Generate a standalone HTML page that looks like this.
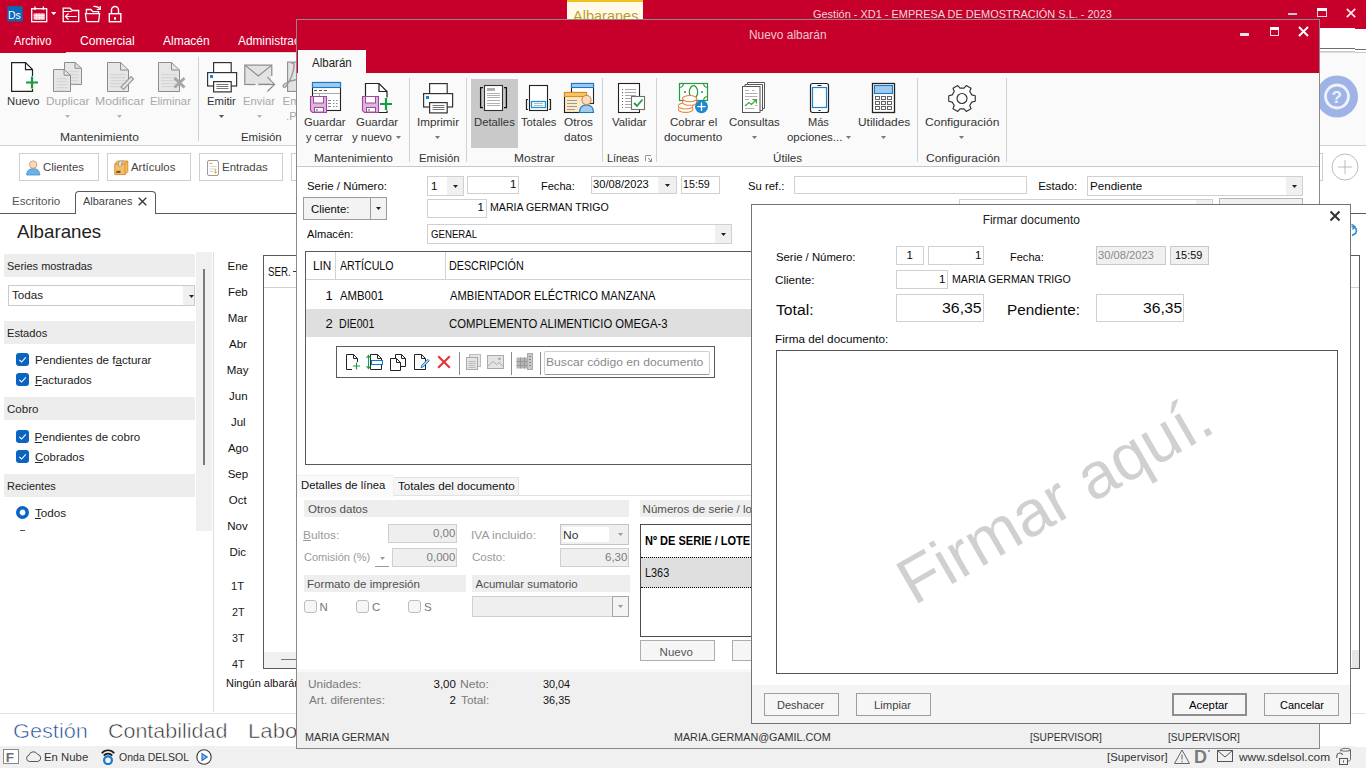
<!DOCTYPE html>
<html lang="es"><head><meta charset="utf-8"><title>Firmar documento</title><style>
html,body{margin:0;padding:0;}
body{width:1366px;height:768px;overflow:hidden;background:#fff;font-family:"Liberation Sans",sans-serif;position:relative;}
.a{position:absolute;box-sizing:border-box;display:block;}
.t{position:absolute;white-space:pre;display:block;}
.t u{text-decoration:underline;text-underline-offset:1px;}
.w{position:absolute;box-sizing:border-box;overflow:hidden;}
</style></head><body>
<div class="a " style="left:0px;top:0px;width:1366px;height:53px;background:#c7002b;"></div>
<div class="a " style="left:0px;top:53px;width:1366px;height:93px;background:#fafafa;"></div>
<div class="a " style="left:66px;top:52px;width:1300px;height:1px;background:#dcdcdc;"></div>
<div class="a " style="left:0px;top:145px;width:1366px;height:1px;background:#d2d2d2;"></div>
<div class="a " style="left:1320px;top:28px;width:35px;height:24px;background:#ffffff;"></div>
<div class="a " style="left:1355px;top:29px;width:11px;height:24px;background:#ffffff;"></div>
<div class="a " style="left:1320px;top:48px;width:35px;height:1px;background:#6e6e6e;"></div>
<div class="a " style="left:1355px;top:49px;width:11px;height:1px;background:#6e6e6e;"></div>
<div class="a " style="left:1320px;top:51px;width:35px;height:1px;background:#c8c8c8;"></div>
<div class="a " style="left:1355px;top:52px;width:11px;height:1px;background:#c8c8c8;"></div>
<div class="a " style="left:567px;top:0px;width:76px;height:19px;background:#fffbe8;"></div>
<div class="a " style="left:567px;top:0px;width:76px;height:2px;background:#f2c11d;"></div>
<span class="t" style="left:572.50px;top:7.50px;font-size:15px;line-height:15px;color:#c19a28;transform:scaleX(0.9687);transform-origin:0 0;">Albaranes</span>
<span class="t" style="left:812.50px;top:8.79px;font-size:11px;line-height:11px;color:#f3d6db;transform:scaleX(0.9958);transform-origin:0 0;">Gestión - XD1 - EMPRESA DE DEMOSTRACIÓN S.L. - 2023</span>
<div class="a " style="left:1288px;top:13px;width:9px;height:2px;background:#c3c9c8;"></div>
<svg class="a" style="left:1317px;top:8px;" width="10" height="9" viewBox="0 0 10 9"><rect x="0.5" y="0.5" width="9" height="8" fill="none" stroke="#ecd9dc"/><rect x="0" y="0" width="10" height="3" fill="#fff"/></svg>
<svg class="a" style="left:1346px;top:8px;" width="10" height="10" viewBox="0 0 10 10"><path d="M0.8 0.8L9.2 9.2M9.2 0.8L0.8 9.2" stroke="#f4e9ea" stroke-width="1.7"/></svg>
<svg class="a" style="left:7px;top:6px;" width="16" height="16" viewBox="0 0 16 16"><rect x="0.4" y="0.2" width="15.3" height="15.2" fill="#0a6ab8"/></svg>
<span class="t" style="left:8.45px;top:9.61px;font-size:10.5px;line-height:10.5px;color:#fff;transform:scaleX(1.0043);transform-origin:0 0;">Ds</span>
<svg class="a" style="left:31px;top:6px;" width="17" height="17" viewBox="0 0 17 17"><rect x="0.7" y="2.7" width="15" height="13" fill="none" stroke="#fff" stroke-width="1.3"/><rect x="2.6" y="7.4" width="11.2" height="6.4" fill="#f3bcc7"/><path d="M2.6 9.6H13.8M2.6 11.7H13.8M5.4 7.4V13.8M8.2 7.4V13.8M11 7.4V13.8" stroke="#fff" stroke-width="0.7"/><path d="M4 0.5V4M12.4 0.5V4" stroke="#fff" stroke-width="1.3"/></svg>
<svg class="a" style="left:50.8px;top:11.950000000000001px;" width="5.4" height="3.2" viewBox="0 0 5.4 3.2"><path d="M0 0H5.4L2.7 3.2Z" fill="#fff"/></svg>
<svg class="a" style="left:62px;top:7px;" width="18" height="16" viewBox="0 0 18 16"><path d="M1.2 14.7V1.2H8L10.4 3.5H16.7V14.7Z" fill="none" stroke="#fff" stroke-width="1.3"/><path d="M1.2 4.5H9.2L10.4 3.5" fill="none" stroke="#fff" stroke-width="1"/><path d="M14.7 9.5H3.8M6.5 6.5L3.5 9.5L6.5 12.5" fill="none" stroke="#fff" stroke-width="1.2"/></svg>
<svg class="a" style="left:84px;top:4px;" width="18" height="19" viewBox="0 0 18 19"><path d="M2.4 9.7V5.5H6.9L8.8 7.7H14.6V9.7" fill="none" stroke="#fff" stroke-width="1.3"/><path d="M1.4 9.7H15.6L14.6 17.7H2.6Z" fill="none" stroke="#fff" stroke-width="1.3"/><path d="M9.3 2.5C12.5 2.2 14.8 3 16 5.3" fill="none" stroke="#fff" stroke-width="1.2"/><path d="M16.3 2V5.5H12.8" fill="none" stroke="#fff" stroke-width="1.2"/></svg>
<svg class="a" style="left:108px;top:5px;" width="14" height="18" viewBox="0 0 14 18"><rect x="1.3" y="8.7" width="11.5" height="8" fill="none" stroke="#fff" stroke-width="1.4"/><path d="M3.5 8.7V5A3.5 3.5 0 0 1 10.5 5V8.7" fill="none" stroke="#fff" stroke-width="1.4"/><rect x="6" y="12.2" width="2" height="2.5" fill="#fff"/></svg>
<span class="t" style="left:14.00px;top:35.24px;font-size:12px;line-height:12px;color:#fff;transform:scaleX(0.9338);transform-origin:0 0;">Archivo</span>
<span class="t" style="left:80.49px;top:35.24px;font-size:12px;line-height:12px;color:#fff;transform:scaleX(1.0142);transform-origin:0 0;">Comercial</span>
<span class="t" style="left:163.00px;top:35.24px;font-size:12px;line-height:12px;color:#fff;">Almacén</span>
<span class="t" style="left:238.00px;top:35.24px;font-size:12px;line-height:12px;color:#fff;transform:scaleX(0.9872);transform-origin:0 0;">Administración</span>
<svg class="a" style="left:11px;top:61px;" width="28" height="32" viewBox="0 0 28 32"><path d="M0.6 1.6H14.5L21.5 8.6V30.4H0.6Z" fill="#fff" stroke="#222" stroke-width="1.2"/><path d="M14.5 1.6V8.6H21.5" fill="none" stroke="#222" stroke-width="1.2"/><rect x="14.5" y="15" width="10" height="13" fill="#f5f5f5"/><rect x="14.5" y="15" width="6.4" height="13" fill="#fff"/><path d="M21 15.5V27.5M15 21.5H27" stroke="#1a9a3a" stroke-width="2.2"/></svg>
<span class="t" style="left:6.74px;top:95.57px;font-size:11.5px;line-height:11.5px;color:#333;transform:scaleX(0.9812);transform-origin:0 0;">Nuevo</span>
<svg class="a" style="left:52px;top:61px;" width="32" height="32" viewBox="0 0 32 32"><path d="M12.5 1.5H23.04L29.5 7.220000000000001V23.5H12.5Z" fill="#e6e6e6" stroke="#8c8c8c" stroke-width="1"/><path d="M23.04 1.5V7.220000000000001H29.5" fill="none" stroke="#8c8c8c" stroke-width="1"/><path d="M15.5 10.74H26.5" stroke="#d2d2d2" stroke-width="1"/><path d="M15.5 13.74H26.5" stroke="#d2d2d2" stroke-width="1"/><path d="M15.5 16.740000000000002H26.5" stroke="#d2d2d2" stroke-width="1"/><path d="M15.5 19.740000000000002H26.5" stroke="#d2d2d2" stroke-width="1"/><path d="M15.5 22.740000000000002H26.5" stroke="#d2d2d2" stroke-width="1"/><path d="M1.5 8.5H12.04L18.5 14.22V30.5H1.5Z" fill="#e6e6e6" stroke="#8c8c8c" stroke-width="1"/><path d="M12.04 8.5V14.22H18.5" fill="none" stroke="#8c8c8c" stroke-width="1"/><path d="M4.5 17.740000000000002H15.5" stroke="#d2d2d2" stroke-width="1"/><path d="M4.5 20.740000000000002H15.5" stroke="#d2d2d2" stroke-width="1"/><path d="M4.5 23.740000000000002H15.5" stroke="#d2d2d2" stroke-width="1"/><path d="M4.5 26.740000000000002H15.5" stroke="#d2d2d2" stroke-width="1"/><path d="M4.5 29.740000000000002H15.5" stroke="#d2d2d2" stroke-width="1"/></svg>
<span class="t" style="left:45.60px;top:95.57px;font-size:11.5px;line-height:11.5px;color:#a9a9a9;transform:scaleX(1.0303);transform-origin:0 0;">Duplicar</span>
<svg class="a" style="left:64.5px;top:115.25px;" width="5" height="3.0" viewBox="0 0 5 3.0"><path d="M0 0H5L2.5 3.0Z" fill="#b5b5b5"/></svg>
<svg class="a" style="left:106px;top:61px;" width="30" height="32" viewBox="0 0 30 32"><path d="M1.5 1.5H14.52L22.5 9.04V30.5H1.5Z" fill="#e6e6e6" stroke="#8c8c8c" stroke-width="1"/><path d="M14.52 1.5V9.04H22.5" fill="none" stroke="#8c8c8c" stroke-width="1"/><path d="M4.5 13.68H19.5" stroke="#d2d2d2" stroke-width="1"/><path d="M4.5 16.68H19.5" stroke="#d2d2d2" stroke-width="1"/><path d="M4.5 19.68H19.5" stroke="#d2d2d2" stroke-width="1"/><path d="M4.5 22.68H19.5" stroke="#d2d2d2" stroke-width="1"/><path d="M4.5 25.68H19.5" stroke="#d2d2d2" stroke-width="1"/><path d="M15 26L25 15.5L27.5 18L17.5 28.5Z" fill="#e6e6e6" stroke="#9a9a9a" stroke-width="1.2"/></svg>
<span class="t" style="left:94.57px;top:95.57px;font-size:11.5px;line-height:11.5px;color:#a9a9a9;transform:scaleX(1.0601);transform-origin:0 0;">Modificar</span>
<svg class="a" style="left:116.5px;top:115.25px;" width="5" height="3.0" viewBox="0 0 5 3.0"><path d="M0 0H5L2.5 3.0Z" fill="#b5b5b5"/></svg>
<svg class="a" style="left:157px;top:61px;" width="30" height="32" viewBox="0 0 30 32"><path d="M1.5 1.5H14.52L22.5 9.04V30.5H1.5Z" fill="#e6e6e6" stroke="#8c8c8c" stroke-width="1"/><path d="M14.52 1.5V9.04H22.5" fill="none" stroke="#8c8c8c" stroke-width="1"/><path d="M4.5 13.68H19.5" stroke="#d2d2d2" stroke-width="1"/><path d="M4.5 16.68H19.5" stroke="#d2d2d2" stroke-width="1"/><path d="M4.5 19.68H19.5" stroke="#d2d2d2" stroke-width="1"/><path d="M4.5 22.68H19.5" stroke="#d2d2d2" stroke-width="1"/><path d="M4.5 25.68H19.5" stroke="#d2d2d2" stroke-width="1"/><path d="M17.5 17L27.5 26.5M27.5 17L17.5 26.5" stroke="#a6a6a6" stroke-width="3"/></svg>
<span class="t" style="left:150.14px;top:95.57px;font-size:11.5px;line-height:11.5px;color:#a9a9a9;transform:scaleX(0.9846);transform-origin:0 0;">Eliminar</span>
<span class="t" style="left:59.59px;top:131.67px;font-size:11.5px;line-height:11.5px;color:#333;transform:scaleX(1.0455);transform-origin:0 0;">Mantenimiento</span>
<div class="a " style="left:198px;top:57px;width:1px;height:84px;background:#d0d0d0;"></div>
<svg class="a" style="left:207px;top:62px;" width="31" height="31" viewBox="0 0 31 31"><rect x="6.6" y="0.6" width="17.6" height="12" fill="#fff" stroke="#333" stroke-width="1.2"/><rect x="0.6" y="10.6" width="29" height="13.4" fill="#fff" stroke="#333" stroke-width="1.2"/><rect x="6.6" y="19.6" width="17.6" height="10.3" fill="#fff" stroke="#333" stroke-width="1.2"/><path d="M9.5 22.5H21.5M9.5 24.5H21.5M9.5 26.5H21.5" stroke="#666" stroke-width="0.9"/><rect x="3" y="13" width="3" height="3" fill="#1a80d0"/></svg>
<span class="t" style="left:206.84px;top:95.57px;font-size:11.5px;line-height:11.5px;color:#333;transform:scaleX(0.9797);transform-origin:0 0;">Emitir</span>
<svg class="a" style="left:219.1px;top:115.25px;" width="5" height="3.0" viewBox="0 0 5 3.0"><path d="M0 0H5L2.5 3.0Z" fill="#555"/></svg>
<svg class="a" style="left:244px;top:64px;" width="33" height="29" viewBox="0 0 33 29"><rect x="0.8" y="1.1" width="27" height="19.4" fill="#e3e3e3" stroke="#8c8c8c" stroke-width="1.2"/><path d="M0.8 1.1L14.3 11.9L27.8 1.1" fill="none" stroke="#8c8c8c" stroke-width="1.2"/><rect x="11.5" y="19.5" width="3" height="2.2" fill="#fafafa"/><rect x="27" y="12" width="3" height="9" fill="#fafafa"/><path d="M14.3 20.4H30.3M23.4 13.2L30.5 20.4L23.4 27.5" fill="none" stroke="#8c8c8c" stroke-width="1.2"/></svg>
<span class="t" style="left:243.14px;top:95.57px;font-size:11.5px;line-height:11.5px;color:#a9a9a9;transform:scaleX(0.9802);transform-origin:0 0;">Enviar</span>
<svg class="a" style="left:256.5px;top:115.25px;" width="5" height="3.0" viewBox="0 0 5 3.0"><path d="M0 0H5L2.5 3.0Z" fill="#b5b5b5"/></svg>
<svg class="a" style="left:287px;top:61px;overflow:visible;" width="12" height="32" viewBox="0 0 12 32"><rect x="0.6" y="1.1" width="20" height="29.3" fill="#e3e3e3" stroke="#8c8c8c" stroke-width="1.1"/><path d="M5 3C4 1 7.5 1 7 5C6.5 12 4 18 -0.5 24.5C-3 28 -5.5 25.5 -2.5 23C1 20.5 5 19.3 9 18.8" fill="none" stroke="#9a9a9a" stroke-width="1.5"/></svg>
<span class="t" style="left:282.52px;top:95.57px;font-size:11.5px;line-height:11.5px;color:#a9a9a9;">Em</span>
<span class="t" style="left:286.00px;top:110.77px;font-size:11.5px;line-height:11.5px;color:#a9a9a9;">.P</span>
<span class="t" style="left:240.53px;top:131.67px;font-size:11.5px;line-height:11.5px;color:#333;transform:scaleX(0.9930);transform-origin:0 0;">Emisión</span>
<svg class="a" style="left:1315px;top:75px;" width="44" height="44" viewBox="0 0 44 44"><circle cx="22" cy="21.5" r="21" fill="#9fb3e6"/><circle cx="22" cy="21.5" r="11.5" fill="none" stroke="#eef2fc" stroke-width="2.8"/></svg>
<span class="t" style="left:1331.55px;top:89.01px;font-size:17px;line-height:17px;color:#eef2fc;font-weight:bold;">?</span>
<svg class="a" style="left:1330.7px;top:152.5px;" width="28" height="28" viewBox="0 0 28 28"><circle cx="14" cy="14" r="13" fill="#fff" stroke="#b4b4b4" stroke-width="0.9"/><path d="M14 7V21M7 14H21" stroke="#b4b4b4" stroke-width="0.9"/></svg>
<div class="a " style="left:1320px;top:153px;width:3px;height:28px;background:#fff;border:1px solid #cfcfcf;border-left:none;"></div>
<div class="a " style="left:19px;top:153px;width:80px;height:28px;background:#fff;border:1px solid #cfcfcf;"></div>
<span class="t" style="left:42.51px;top:161.67px;font-size:11.5px;line-height:11.5px;color:#444;transform:scaleX(0.9846);transform-origin:0 0;">Clientes</span>
<svg class="a" style="left:25px;top:158px;" width="18" height="18" viewBox="0 0 18 18"><path d="M1.6 17C1.8 12.6 4.5 10.6 8.2 10.6S14.6 12.6 14.8 17Z" fill="#6fb1e6" stroke="#3f8fd2" stroke-width="0.8"/><circle cx="8.2" cy="6.6" r="3.7" fill="#f9dcc0" stroke="#cf9a6a" stroke-width="0.9"/></svg>
<div class="a " style="left:107px;top:153px;width:84px;height:28px;background:#fff;border:1px solid #cfcfcf;"></div>
<span class="t" style="left:131.00px;top:161.67px;font-size:11.5px;line-height:11.5px;color:#444;transform:scaleX(0.9915);transform-origin:0 0;">Artículos</span>
<svg class="a" style="left:113px;top:158px;" width="18" height="18" viewBox="0 0 18 18"><path d="M1.8 6L4.5 3H14.8V13.8L12 16.6H1.8Z" fill="#f5bf6a" stroke="#d08a28" stroke-width="0.9"/><path d="M1.8 6H12V16.6M12 6L14.8 3" fill="none" stroke="#d08a28" stroke-width="0.9"/><path d="M5.5 8V5L7.5 3H10.5L8.5 5V8Z" fill="#e4e4e4" stroke="#888" stroke-width="0.6"/><rect x="3.3" y="12.8" width="4.2" height="2.2" fill="#7a5a2a"/></svg>
<div class="a " style="left:199px;top:153px;width:84px;height:28px;background:#fff;border:1px solid #cfcfcf;"></div>
<span class="t" style="left:221.63px;top:161.67px;font-size:11.5px;line-height:11.5px;color:#444;transform:scaleX(0.9944);transform-origin:0 0;">Entradas</span>
<svg class="a" style="left:205px;top:158px;" width="18" height="18" viewBox="0 0 18 18"><rect x="2.5" y="2.5" width="11" height="15" rx="1.5" fill="#fff" stroke="#9a9a9a"/><path d="M4.5 5.5H7.5" stroke="#e9b23e" stroke-width="1.2"/><path d="M4.5 8.5H11.5M4.5 11H11.5M4.5 13.5H8" stroke="#d4d4d4" stroke-width="1"/><path d="M10.5 11V15M8.8 13.6L10.5 15.5L12.2 13.6" fill="none" stroke="#e9b23e" stroke-width="1"/></svg>
<div class="a " style="left:291px;top:153px;width:20px;height:28px;background:#fff;border:1px solid #cfcfcf;"></div>
<div class="a " style="left:0px;top:213px;width:1366px;height:1px;background:#5a5a5a;"></div>
<span class="t" style="left:12.12px;top:195.67px;font-size:11.5px;line-height:11.5px;color:#555;transform:scaleX(1.0080);transform-origin:0 0;">Escritorio</span>
<div class="a " style="left:75px;top:191px;width:81px;height:23px;background:#fff;border:1px solid #5a5a5a;border-bottom:none;border-radius:4px 4px 0 0;"></div>
<span class="t" style="left:83.00px;top:195.67px;font-size:11.5px;line-height:11.5px;color:#444;transform:scaleX(0.9538);transform-origin:0 0;">Albaranes</span>
<svg class="a" style="left:137.5px;top:196.5px;" width="9" height="9" viewBox="0 0 9 9"><path d="M0.7 0.7L8.3 8.3M8.3 0.7L0.7 8.3" stroke="#333" stroke-width="1.3"/></svg>
<span class="t" style="left:17.00px;top:222.74px;font-size:18.5px;line-height:18.5px;color:#222;transform:scaleX(1.0106);transform-origin:0 0;">Albaranes</span>
<div class="a " style="left:196px;top:252px;width:16px;height:279px;background:#f0f0f0;"></div>
<div class="a " style="left:213px;top:252px;width:1px;height:460px;background:#dedede;"></div>
<div class="a " style="left:4px;top:254px;width:191px;height:23px;background:#ededed;"></div>
<span class="t" style="left:7.02px;top:260.67px;font-size:11.5px;line-height:11.5px;color:#222;transform:scaleX(0.9535);transform-origin:0 0;">Series mostradas</span>
<div class="a " style="left:8px;top:285px;width:187px;height:21px;background:#fff;border:1px solid #cbcbcb;"></div>
<div class="a " style="left:183px;top:286px;width:11px;height:19px;background:#f0f0f0;"></div>
<span class="t" style="left:11.75px;top:290.17px;font-size:11.5px;line-height:11.5px;color:#222;transform:scaleX(1.0124);transform-origin:0 0;">Todas</span>
<svg class="a" style="left:188.5px;top:294.75px;" width="5" height="3.0" viewBox="0 0 5 3.0"><path d="M0 0H5L2.5 3.0Z" fill="#222"/></svg>
<div class="a " style="left:203px;top:269px;width:2px;height:196px;background:#7a7a7a;"></div>
<div class="a " style="left:4px;top:321px;width:191px;height:23px;background:#ededed;"></div>
<span class="t" style="left:6.65px;top:327.67px;font-size:11.5px;line-height:11.5px;color:#222;transform:scaleX(0.9689);transform-origin:0 0;">Estados</span>
<svg class="a" style="left:16px;top:353px;" width="13" height="13" viewBox="0 0 13 13"><rect x="0" y="0" width="13" height="13" rx="3" fill="#0a64c2"/><path d="M3.3 6.8L5.6 9L9.8 4.3" fill="none" stroke="#fff" stroke-width="1.1"/></svg>
<span class="t" style="left:34.62px;top:354.92px;font-size:11.5px;line-height:11.5px;color:#222;transform:scaleX(1.0065);transform-origin:0 0;">Pendientes de f<u>a</u>cturar</span>
<svg class="a" style="left:16px;top:373px;" width="13" height="13" viewBox="0 0 13 13"><rect x="0" y="0" width="13" height="13" rx="3" fill="#0a64c2"/><path d="M3.3 6.8L5.6 9L9.8 4.3" fill="none" stroke="#fff" stroke-width="1.1"/></svg>
<span class="t" style="left:34.64px;top:374.67px;font-size:11.5px;line-height:11.5px;color:#222;transform:scaleX(0.9867);transform-origin:0 0;"><u>F</u>acturados</span>
<div class="a " style="left:4px;top:397px;width:191px;height:23px;background:#ededed;"></div>
<span class="t" style="left:7.00px;top:403.67px;font-size:11.5px;line-height:11.5px;color:#222;transform:scaleX(1.0041);transform-origin:0 0;">Cobro</span>
<svg class="a" style="left:16px;top:430px;" width="13" height="13" viewBox="0 0 13 13"><rect x="0" y="0" width="13" height="13" rx="3" fill="#0a64c2"/><path d="M3.3 6.8L5.6 9L9.8 4.3" fill="none" stroke="#fff" stroke-width="1.1"/></svg>
<span class="t" style="left:34.62px;top:431.92px;font-size:11.5px;line-height:11.5px;color:#222;"><u>P</u>endientes de cobro</span>
<svg class="a" style="left:16px;top:450px;" width="13" height="13" viewBox="0 0 13 13"><rect x="0" y="0" width="13" height="13" rx="3" fill="#0a64c2"/><path d="M3.3 6.8L5.6 9L9.8 4.3" fill="none" stroke="#fff" stroke-width="1.1"/></svg>
<span class="t" style="left:35.01px;top:451.67px;font-size:11.5px;line-height:11.5px;color:#222;transform:scaleX(0.9898);transform-origin:0 0;"><u>C</u>obrados</span>
<div class="a " style="left:4px;top:474px;width:191px;height:23px;background:#ededed;"></div>
<span class="t" style="left:6.67px;top:480.67px;font-size:11.5px;line-height:11.5px;color:#222;transform:scaleX(0.9524);transform-origin:0 0;">Recientes</span>
<svg class="a" style="left:16px;top:506px;" width="13" height="13" viewBox="0 0 13 13"><circle cx="6.5" cy="6.5" r="4.7" fill="#fff" stroke="#0a64c2" stroke-width="3.6"/></svg>
<span class="t" style="left:34.75px;top:507.92px;font-size:11.5px;line-height:11.5px;color:#222;transform:scaleX(1.0124);transform-origin:0 0;"><u>T</u>odos</span>
<div class="a " style="left:20px;top:530px;width:5px;height:1px;background:#555;"></div>
<span class="t" style="left:227.50px;top:261.17px;font-size:11.5px;line-height:11.5px;color:#111;">Ene</span>
<span class="t" style="left:227.88px;top:287.17px;font-size:11.5px;line-height:11.5px;color:#111;">Feb</span>
<span class="t" style="left:227.69px;top:313.17px;font-size:11.5px;line-height:11.5px;color:#111;">Mar</span>
<span class="t" style="left:229.06px;top:339.17px;font-size:11.5px;line-height:11.5px;color:#111;">Abr</span>
<span class="t" style="left:226.69px;top:365.17px;font-size:11.5px;line-height:11.5px;color:#111;">May</span>
<span class="t" style="left:229.00px;top:391.17px;font-size:11.5px;line-height:11.5px;color:#111;">Jun</span>
<span class="t" style="left:230.94px;top:417.17px;font-size:11.5px;line-height:11.5px;color:#111;">Jul</span>
<span class="t" style="left:227.94px;top:443.17px;font-size:11.5px;line-height:11.5px;color:#111;">Ago</span>
<span class="t" style="left:227.69px;top:469.17px;font-size:11.5px;line-height:11.5px;color:#111;">Sep</span>
<span class="t" style="left:228.81px;top:495.17px;font-size:11.5px;line-height:11.5px;color:#111;">Oct</span>
<span class="t" style="left:227.31px;top:521.17px;font-size:11.5px;line-height:11.5px;color:#111;">Nov</span>
<span class="t" style="left:229.38px;top:547.17px;font-size:11.5px;line-height:11.5px;color:#111;">Dic</span>
<span class="t" style="left:231.15px;top:581.17px;font-size:11.5px;line-height:11.5px;color:#222;transform:scaleX(0.9697);transform-origin:0 0;">1T</span>
<span class="t" style="left:231.53px;top:607.07px;font-size:11.5px;line-height:11.5px;color:#222;transform:scaleX(0.9412);transform-origin:0 0;">2T</span>
<span class="t" style="left:231.65px;top:632.97px;font-size:11.5px;line-height:11.5px;color:#222;transform:scaleX(0.9320);transform-origin:0 0;">3T</span>
<span class="t" style="left:231.77px;top:658.87px;font-size:11.5px;line-height:11.5px;color:#222;transform:scaleX(0.9231);transform-origin:0 0;">4T</span>
<div class="a " style="left:263px;top:255px;width:1097px;height:414px;background:#fff;border:1px solid #5a5a5a;"></div>
<div class="a " style="left:264px;top:287px;width:1095px;height:1px;background:#d0d0d0;"></div>
<span class="t" style="left:267.61px;top:266.32px;font-size:12.5px;line-height:12.5px;color:#111;transform:scaleX(0.7819);transform-origin:0 0;">SER.</span>
<div class="a " style="left:293px;top:271px;width:3px;height:1px;background:#333;"></div>
<div class="a " style="left:264px;top:652px;width:1087px;height:16px;background:#f0f0f0;"></div>
<div class="a " style="left:281px;top:659px;width:16px;height:1px;background:#777;"></div>
<div class="a " style="left:1352px;top:650px;width:7px;height:18px;background:#e6e6e6;"></div>
<span class="t" style="left:226.17px;top:677.92px;font-size:11.5px;line-height:11.5px;color:#111;transform:scaleX(0.9542);transform-origin:0 0;">Ningún albarán</span>
<svg class="a" style="left:1351px;top:223px;" width="8" height="14" viewBox="0 0 8 14"><path d="M0.5 3.5C5 3.5 6.5 7 4.5 10.5L1 12.5" fill="none" stroke="#2a8ad4" stroke-width="1.6"/><path d="M0.5 1L4 3.5L1.5 6.5" fill="none" stroke="#2a8ad4" stroke-width="1.3"/></svg>
<div class="a " style="left:0px;top:713px;width:1366px;height:1px;background:#e2e2e2;"></div>
<span class="t" style="left:13.44px;top:720.55px;font-size:20.5px;line-height:20.5px;color:#1e4c92;transform:scaleX(1.0603);transform-origin:0 0;-webkit-text-stroke:0.55px #fff;">Gestión</span>
<span class="t" style="left:108.45px;top:720.55px;font-size:20.5px;line-height:20.5px;color:#2e2e2e;transform:scaleX(1.0470);transform-origin:0 0;-webkit-text-stroke:0.55px #fff;">Contabilidad</span>
<span class="t" style="left:248.24px;top:720.55px;font-size:20.5px;line-height:20.5px;color:#2e2e2e;transform:scaleX(1.0840);transform-origin:0 0;-webkit-text-stroke:0.55px #fff;">Laboral</span>
<div class="a " style="left:0px;top:746px;width:1355px;height:22px;background:#f0f0f0;"></div>
<div class="a " style="left:1355px;top:747px;width:11px;height:21px;background:#f0f0f0;"></div>
<div class="a " style="left:3px;top:749px;width:16px;height:15px;background:#fff;border:1px solid #8a8a8a;"></div>
<span class="t" style="left:5.72px;top:750.67px;font-size:13.5px;line-height:13.5px;color:#6e6e6e;font-weight:bold;">F</span>
<svg class="a" style="left:25px;top:750px;" width="17" height="13" viewBox="0 0 17 13"><path d="M4.5 11.5A3.2 3.2 0 0 1 4 5.2A4.6 4.6 0 0 1 12.6 4.4A3.6 3.6 0 0 1 12.8 11.5Z" fill="none" stroke="#555" stroke-width="1"/></svg>
<span class="t" style="left:43.64px;top:751.67px;font-size:11.5px;line-height:11.5px;color:#333;transform:scaleX(0.9885);transform-origin:0 0;">En Nube</span>
<svg class="a" style="left:101px;top:749px;" width="14" height="16" viewBox="0 0 14 16"><circle cx="7" cy="11.2" r="3.9" fill="none" stroke="#1a78c8" stroke-width="2.2"/><path d="M2.8 6.6A5.4 5.4 0 0 1 11.2 6.6M0.8 4.2A8 8 0 0 1 13.2 4.2" fill="none" stroke="#1a1a1a" stroke-width="1.7"/></svg>
<span class="t" style="left:119.04px;top:751.67px;font-size:11.5px;line-height:11.5px;color:#333;transform:scaleX(0.9145);transform-origin:0 0;">Onda DELSOL</span>
<svg class="a" style="left:196px;top:749px;" width="16" height="16" viewBox="0 0 16 16"><circle cx="8" cy="8" r="7.2" fill="#fff" stroke="#3a3a3a" stroke-width="1.1"/><path d="M6 4.6L11.3 8L6 11.4Z" fill="#7fb6ee" stroke="#1a6fd0" stroke-width="1.1"/></svg>
<span class="t" style="left:1107.26px;top:751.67px;font-size:11.5px;line-height:11.5px;color:#333;transform:scaleX(0.9874);transform-origin:0 0;">[Supervisor]</span>
<svg class="a" style="left:1173.5px;top:749px;" width="16" height="15" viewBox="0 0 16 15"><path d="M8 1L15.5 14.5H0.5Z" fill="none" stroke="#666" stroke-width="1"/><path d="M8 5.5V10.5M8 11.8V13.3" stroke="#666" stroke-width="1"/></svg>
<span class="t" style="left:1193.88px;top:747.96px;font-size:18px;line-height:18px;color:#7a7a7a;font-weight:bold;">D</span>
<div class="a " style="left:1208px;top:750px;width:2px;height:2px;background:#9a9a9a;"></div>
<svg class="a" style="left:1217px;top:750px;" width="17" height="12" viewBox="0 0 17 12"><rect x="0.5" y="0.5" width="15" height="11" fill="none" stroke="#555"/><path d="M0.5 0.5L8 7L15.5 0.5" fill="none" stroke="#555"/></svg>
<span class="t" style="left:1238.50px;top:751.67px;font-size:11.5px;line-height:11.5px;color:#333;transform:scaleX(1.0328);transform-origin:0 0;">www.sdelsol.com</span>
<svg class="a" style="left:1335px;top:747px;" width="17" height="19" viewBox="0 0 17 19"><path d="M5.8 4.5V2.8C5.8 0.9 15.5 0.9 15.5 2.8V12.5C15.5 13.6 13.5 14.2 12.6 14.2" fill="none" stroke="#666" stroke-width="1"/><path d="M5.8 2.8C5.8 4.6 15.5 4.6 15.5 2.8" fill="none" stroke="#666" stroke-width="1"/><path d="M1.8 11V8.6A3 3 0 0 1 7.6 8" fill="none" stroke="#666" stroke-width="1.2"/><rect x="4.5" y="11.5" width="8" height="6" fill="#f0f0f0" stroke="#555" stroke-width="1"/><rect x="8" y="13.5" width="1" height="2" fill="#555"/></svg>
<div class="a " style="left:296px;top:19px;width:1024px;height:730px;background:#fff;border:1px solid #8a8a8a;"></div>
<div class="a " style="left:297px;top:20px;width:1022px;height:53px;background:#c7002b;"></div>
<div class="a " style="left:297px;top:73px;width:1022px;height:93px;background:#fafafa;"></div>
<div class="a " style="left:297px;top:166px;width:1022px;height:1px;background:#c8c8c8;"></div>
<span class="t" style="left:749.13px;top:29.24px;font-size:12px;line-height:12px;color:#f0c9d0;transform:scaleX(0.9935);transform-origin:0 0;">Nuevo albarán</span>
<div class="a " style="left:1240px;top:33px;width:9px;height:3px;background:#efe3e4;"></div>
<svg class="a" style="left:1270px;top:27px;" width="9" height="9" viewBox="0 0 9 9"><rect x="0.5" y="0.5" width="8" height="8" fill="none" stroke="#f3dfe2"/><rect x="0" y="0" width="9" height="3" fill="#fff"/></svg>
<svg class="a" style="left:1298px;top:26px;" width="11" height="11" viewBox="0 0 11 11"><path d="M1 1L10 10M10 1L1 10" stroke="#fff" stroke-width="2"/></svg>
<div class="a " style="left:298px;top:50px;width:68px;height:24px;background:#fafafa;"></div>
<span class="t" style="left:312.40px;top:56.74px;font-size:12px;line-height:12px;color:#222;transform:scaleX(0.9595);transform-origin:0 0;">Albarán</span>
<svg class="a" style="left:309px;top:81px;" width="34" height="33" viewBox="0 0 34 33"><rect x="3.5" y="1.5" width="28" height="28" fill="#fff" stroke="#222" stroke-width="1.1"/><rect x="3.5" y="1.5" width="28" height="5" fill="#9ecbee" stroke="#1a78c8" stroke-width="1.1"/><path d="M5 9.5H8M10 9.5H13M15 9.5H18" stroke="#555" stroke-width="1"/><path d="M4 12.5H31M10.5 12.5V29" stroke="#aaa" stroke-width="1"/><path d="M19 19.5H22M24 19.5H25.5M27 19.5H28.5M19 22.5H22M24 22.5H25.5M27 22.5H28.5M19 25.5H22M24 25.5H25.5M27 25.5H28.5" stroke="#888" stroke-width="1"/><path d="M1.5 15.5H17.5V31.5H3.5L1.5 29.5Z" fill="#dcb6dc" stroke="#a048a0" stroke-width="1.1"/><rect x="4.5" y="15.5" width="10" height="6.5" fill="#fff" stroke="#a048a0" stroke-width="1"/><rect x="5.5" y="26.5" width="9" height="4.5" fill="#fff" stroke="#a048a0" stroke-width="1"/><rect x="7.5" y="28.0" width="1" height="2" fill="#555"/></svg>
<span class="t" style="left:304.11px;top:116.77px;font-size:11.5px;line-height:11.5px;color:#343434;transform:scaleX(0.9850);transform-origin:0 0;">Guardar</span>
<span class="t" style="left:306.00px;top:132.17px;font-size:11.5px;line-height:11.5px;color:#343434;transform:scaleX(0.9441);transform-origin:0 0;">y cerrar</span>
<svg class="a" style="left:361px;top:82px;" width="33" height="32" viewBox="0 0 33 32"><path d="M4.5 14V1.5H18L26 9.5V30.5H15" fill="#fff" stroke="#222" stroke-width="1.2"/><path d="M18 1.5V9.5H26" fill="none" stroke="#222" stroke-width="1.2"/><rect x="19" y="15.5" width="14" height="13" fill="#fafafa"/><rect x="19" y="15.5" width="6.4" height="13" fill="#fff"/><path d="M25 16V28M19 22H31" stroke="#12a040" stroke-width="2.2"/><path d="M1.5 14.5H17.5V30.5H3.5L1.5 28.5Z" fill="#dcb6dc" stroke="#a048a0" stroke-width="1.1"/><rect x="4.5" y="14.5" width="10" height="6.5" fill="#fff" stroke="#a048a0" stroke-width="1"/><rect x="5.5" y="25.5" width="9" height="4.5" fill="#fff" stroke="#a048a0" stroke-width="1"/><rect x="7.5" y="27.0" width="1" height="2" fill="#555"/></svg>
<span class="t" style="left:356.00px;top:116.77px;font-size:11.5px;line-height:11.5px;color:#343434;">Guardar</span>
<span class="t" style="left:352.00px;top:132.17px;font-size:11.5px;line-height:11.5px;color:#343434;transform:scaleX(0.9906);transform-origin:0 0;">y nuevo</span>
<svg class="a" style="left:396.0px;top:136.25px;" width="5" height="3.0" viewBox="0 0 5 3.0"><path d="M0 0H5L2.5 3.0Z" fill="#777"/></svg>
<span class="t" style="left:313.59px;top:152.67px;font-size:11.5px;line-height:11.5px;color:#343434;transform:scaleX(1.0455);transform-origin:0 0;">Mantenimiento</span>
<div class="a " style="left:409px;top:78px;width:1px;height:84px;background:#d2d2d2;"></div>
<svg class="a" style="left:423px;top:83px;" width="31" height="31" viewBox="0 0 31 31"><rect x="6.6" y="0.6" width="17.6" height="12" fill="#fff" stroke="#333" stroke-width="1.2"/><rect x="0.6" y="10.6" width="29" height="13.4" fill="#fff" stroke="#333" stroke-width="1.2"/><rect x="6.6" y="19.6" width="17.6" height="10.3" fill="#fff" stroke="#333" stroke-width="1.2"/><path d="M9.5 22.5H21.5M9.5 24.5H21.5M9.5 26.5H21.5" stroke="#666" stroke-width="0.9"/><rect x="3" y="13" width="3" height="3" fill="#1a80d0"/></svg>
<span class="t" style="left:416.59px;top:116.77px;font-size:11.5px;line-height:11.5px;color:#343434;transform:scaleX(1.0123);transform-origin:0 0;">Imprimir</span>
<svg class="a" style="left:434.9px;top:136.25px;" width="5" height="3.0" viewBox="0 0 5 3.0"><path d="M0 0H5L2.5 3.0Z" fill="#777"/></svg>
<span class="t" style="left:418.63px;top:152.67px;font-size:11.5px;line-height:11.5px;color:#343434;transform:scaleX(0.9930);transform-origin:0 0;">Emisión</span>
<div class="a " style="left:466px;top:78px;width:1px;height:84px;background:#d2d2d2;"></div>
<div class="a " style="left:471px;top:79px;width:47px;height:69px;background:#c9c9c9;"></div>
<svg class="a" style="left:479px;top:84px;" width="29" height="28" viewBox="0 0 29 28"><rect x="5.5" y="1.5" width="18" height="25" fill="#fff" stroke="#333" stroke-width="1.1"/><rect x="8" y="4" width="8" height="3" fill="#b0b0b0"/><path d="M8 9.5H21M8 11.5H21M8 13.5H21M8 16.5H21M8 19.5H21M8 21.5H21" stroke="#a8a8a8" stroke-width="0.9"/><path d="M4 3.6H1.6V23.6H4M25 3.6H27.4V23.6H25" fill="none" stroke="#111" stroke-width="1.3"/></svg>
<span class="t" style="left:473.84px;top:116.77px;font-size:11.5px;line-height:11.5px;color:#343434;transform:scaleX(0.9814);transform-origin:0 0;">Detalles</span>
<svg class="a" style="left:525px;top:84px;" width="28" height="28" viewBox="0 0 28 28"><rect x="4.5" y="1.5" width="18" height="25" fill="#fff" stroke="#222" stroke-width="1.1"/><rect x="6.5" y="17.5" width="14" height="6" fill="#fff" stroke="#1a9ad6" stroke-width="1.3"/><path d="M9 19.5H18M9 21.5H18" stroke="#aaa" stroke-width="0.8"/><path d="M3 15.5H1.5V25.5H3M24 15.5H25.5V25.5H24" fill="none" stroke="#222" stroke-width="1.2"/></svg>
<span class="t" style="left:521.26px;top:116.77px;font-size:11.5px;line-height:11.5px;color:#343434;transform:scaleX(0.9728);transform-origin:0 0;">Totales</span>
<svg class="a" style="left:563px;top:82px;" width="32" height="32" viewBox="0 0 32 32"><rect x="8.5" y="1.5" width="22" height="20" fill="#fff" stroke="#222" stroke-width="1.1"/><rect x="8.5" y="1.5" width="22" height="4" fill="#9ecbee" stroke="#1a78c8" stroke-width="1.1"/><rect x="1.5" y="10.5" width="22" height="20" fill="#fdebc8" stroke="#222" stroke-width="1.1"/><rect x="1.5" y="10.5" width="22" height="4" fill="#f7c56b" stroke="#e08a1e" stroke-width="1.1"/><path d="M4 18.5H14M4 21.5H14M4 24.5H14M4 27.5H12" stroke="#999" stroke-width="1"/><path d="M16.5 30.5C16.5 25 19.5 23 23.5 23S30.5 25 30.5 30.5Z" fill="#9ecbee" stroke="#1a78c8" stroke-width="1.1"/><circle cx="23.5" cy="18" r="4.6" fill="#fbdcbc" stroke="#c98a52" stroke-width="1.1"/></svg>
<span class="t" style="left:563.88px;top:116.77px;font-size:11.5px;line-height:11.5px;color:#343434;transform:scaleX(1.0312);transform-origin:0 0;">Otros</span>
<span class="t" style="left:564.32px;top:132.17px;font-size:11.5px;line-height:11.5px;color:#343434;transform:scaleX(1.0155);transform-origin:0 0;">datos</span>
<span class="t" style="left:514.49px;top:152.67px;font-size:11.5px;line-height:11.5px;color:#343434;transform:scaleX(1.0421);transform-origin:0 0;">Mostrar</span>
<div class="a " style="left:602px;top:78px;width:1px;height:84px;background:#d2d2d2;"></div>
<svg class="a" style="left:617px;top:82px;" width="30" height="32" viewBox="0 0 30 32"><rect x="1.5" y="1.5" width="21" height="29" fill="#fff" stroke="#222" stroke-width="1.1"/><path d="M8 7.5H19M8 10.5H19M8 13.5H19M8 16.5H19M8 19.5H19M8 22.5H19M8 25.5H19" stroke="#aaa" stroke-width="1"/><path d="M5 10.5H6M5 19.5H6" stroke="#e02020" stroke-width="1"/><path d="M5 7.5H6M5 13.5H6M5 16.5H6M5 22.5H6M5 25.5H6" stroke="#1e9e3e" stroke-width="1"/><rect x="14.5" y="14.5" width="13" height="13" fill="#fff" stroke="#707070" stroke-width="1.1"/><path d="M17 21L20 24L25.5 17.5" fill="none" stroke="#1e9e3e" stroke-width="1.8"/></svg>
<span class="t" style="left:612.40px;top:116.77px;font-size:11.5px;line-height:11.5px;color:#343434;transform:scaleX(0.9921);transform-origin:0 0;">Validar</span>
<span class="t" style="left:606.79px;top:152.67px;font-size:11.5px;line-height:11.5px;color:#343434;transform:scaleX(0.9263);transform-origin:0 0;">Líneas</span>
<svg class="a" style="left:645px;top:155px;" width="8" height="8" viewBox="0 0 8 8"><path d="M0.5 6V0.5H6" fill="none" stroke="#999"/><path d="M3 3L6.5 6.5M6.5 3.5V6.5H3.5" fill="none" stroke="#888" stroke-width="1"/></svg>
<div class="a " style="left:656px;top:78px;width:1px;height:84px;background:#d2d2d2;"></div>
<svg class="a" style="left:678px;top:82px;" width="33" height="32" viewBox="0 0 33 32"><rect x="1.5" y="1.5" width="28" height="17" fill="#fff" stroke="#1e9e3e" stroke-width="1.2"/><ellipse cx="15.5" cy="10" rx="4.2" ry="6.3" fill="none" stroke="#1e9e3e" stroke-width="1.2"/><circle cx="7" cy="10" r="1" fill="#1e9e3e"/><circle cx="24" cy="10" r="1" fill="#1e9e3e"/><path d="M1.5 5.5A4.5 4.5 0 0 0 5.5 1.5M29.5 5.5A4.5 4.5 0 0 1 25.5 1.5M25.5 18.5A4.5 4.5 0 0 1 29.5 14.5" fill="none" stroke="#1e9e3e" stroke-width="1.2"/><ellipse cx="7.6" cy="27.3" rx="7.4" ry="3.1" fill="#fff" stroke="#e8823a" stroke-width="1.1"/><ellipse cx="7.6" cy="23.9" rx="7.4" ry="3.1" fill="#fff" stroke="#e8823a" stroke-width="1.1"/><ellipse cx="11.7" cy="20.2" rx="7.2" ry="3.1" fill="#fff" stroke="#e8823a" stroke-width="1.1"/><ellipse cx="11.7" cy="16.6" rx="7.2" ry="3.1" fill="#fff" stroke="#e8823a" stroke-width="1.1"/><circle cx="23.5" cy="24.7" r="6.5" fill="#1e86d2"/><path d="M23.5 20.5V29M19.3 24.7H27.7" stroke="#fff" stroke-width="1.3"/></svg>
<span class="t" style="left:670.00px;top:116.77px;font-size:11.5px;line-height:11.5px;color:#343434;">Cobrar el</span>
<span class="t" style="left:664.22px;top:132.17px;font-size:11.5px;line-height:11.5px;color:#343434;transform:scaleX(1.0227);transform-origin:0 0;">documento</span>
<svg class="a" style="left:741px;top:81px;" width="25" height="33" viewBox="0 0 25 33"><path d="M6.5 3.5V1.5H23.5V27.5H21" fill="#fff" stroke="#555" stroke-width="1"/><path d="M4 5.5V3.5H21.5V29.5H19" fill="#fff" stroke="#555" stroke-width="1"/><rect x="1.5" y="5.5" width="17.5" height="26" fill="#fff" stroke="#555" stroke-width="1"/><path d="M4 9.5H8M11 9.5H13.5M4 12.5H16.5M4 15.5H16.5M4 18.5H8M14 24.5H16.5M4 27.5H13.5" stroke="#b0b0b0" stroke-width="1"/><path d="M4 25L8 21.5L10.5 23.5L15 19M11.5 18.6H15.4V22.5" fill="none" stroke="#3aa63a" stroke-width="1.2"/></svg>
<span class="t" style="left:729.00px;top:116.77px;font-size:11.5px;line-height:11.5px;color:#343434;transform:scaleX(0.9910);transform-origin:0 0;">Consultas</span>
<svg class="a" style="left:751.5px;top:136.25px;" width="5" height="3.0" viewBox="0 0 5 3.0"><path d="M0 0H5L2.5 3.0Z" fill="#777"/></svg>
<svg class="a" style="left:809px;top:82px;" width="21" height="32" viewBox="0 0 21 32"><rect x="1.5" y="1.5" width="18" height="29" rx="2" fill="#fff" stroke="#222" stroke-width="1.2"/><rect x="3.5" y="5.5" width="14" height="20" fill="#fff" stroke="#1a86d2" stroke-width="1.2"/><path d="M8.5 3.5H12.5M9.5 28.5H11.5" stroke="#222" stroke-width="1"/></svg>
<span class="t" style="left:807.76px;top:116.77px;font-size:11.5px;line-height:11.5px;color:#343434;transform:scaleX(0.9610);transform-origin:0 0;">Más</span>
<span class="t" style="left:786.63px;top:132.17px;font-size:11.5px;line-height:11.5px;color:#343434;transform:scaleX(0.9954);transform-origin:0 0;">opciones...</span>
<svg class="a" style="left:845.5px;top:136.25px;" width="5" height="3.0" viewBox="0 0 5 3.0"><path d="M0 0H5L2.5 3.0Z" fill="#777"/></svg>
<span class="t" style="left:772.82px;top:152.67px;font-size:11.5px;line-height:11.5px;color:#343434;transform:scaleX(1.0109);transform-origin:0 0;">Útiles</span>
<svg class="a" style="left:871px;top:82px;" width="25" height="32" viewBox="0 0 25 32"><rect x="1.5" y="1.5" width="22" height="29" fill="#fff" stroke="#222" stroke-width="1.3"/><rect x="3.5" y="3.5" width="18" height="8" fill="#9ecbee" stroke="#1a78c8" stroke-width="1.1"/><rect x="4.5" y="14.5" width="4" height="3" fill="#fff" stroke="#555" stroke-width="0.9"/><rect x="10.5" y="14.5" width="4" height="3" fill="#fff" stroke="#555" stroke-width="0.9"/><rect x="16.5" y="14.5" width="4" height="3" fill="#fff" stroke="#555" stroke-width="0.9"/><rect x="4.5" y="19.5" width="4" height="3" fill="#fff" stroke="#555" stroke-width="0.9"/><rect x="10.5" y="19.5" width="4" height="3" fill="#fff" stroke="#555" stroke-width="0.9"/><rect x="16.5" y="19.5" width="4" height="3" fill="#fff" stroke="#555" stroke-width="0.9"/><rect x="4.5" y="24.5" width="4" height="3" fill="#fff" stroke="#555" stroke-width="0.9"/><rect x="10.5" y="24.5" width="4" height="3" fill="#fff" stroke="#555" stroke-width="0.9"/><rect x="16.5" y="24.5" width="4" height="3" fill="#fff" stroke="#555" stroke-width="0.9"/></svg>
<span class="t" style="left:857.59px;top:116.77px;font-size:11.5px;line-height:11.5px;color:#343434;transform:scaleX(1.0355);transform-origin:0 0;">Utilidades</span>
<svg class="a" style="left:880.9px;top:136.25px;" width="5" height="3.0" viewBox="0 0 5 3.0"><path d="M0 0H5L2.5 3.0Z" fill="#777"/></svg>
<div class="a " style="left:917px;top:78px;width:1px;height:84px;background:#d2d2d2;"></div>
<svg class="a" style="left:948px;top:84.5px;overflow:visible;" width="28" height="27" viewBox="0 0 28 27"><g transform="translate(14,13.5) rotate(90) scale(1.06)"><path d="M-2.6 -12.5H2.6L3.4 -9.2L6.6 -7.3L9.6 -8.5L12.2 -4L9.8 -1.9V1.9L12.2 4L9.6 8.5L6.6 7.3L3.4 9.2L2.6 12.5H-2.6L-3.4 9.2L-6.6 7.3L-9.6 8.5L-12.2 4L-9.8 1.9V-1.9L-12.2 -4L-9.6 -8.5L-6.6 -7.3L-3.4 -9.2Z" fill="#fff" stroke="#333" stroke-width="1.1" stroke-linejoin="round"/><circle r="4.7" fill="#fff" stroke="#333" stroke-width="1.1"/></g></svg>
<span class="t" style="left:924.98px;top:116.77px;font-size:11.5px;line-height:11.5px;color:#343434;transform:scaleX(1.0476);transform-origin:0 0;">Configuración</span>
<svg class="a" style="left:958.8px;top:136.25px;" width="5" height="3.0" viewBox="0 0 5 3.0"><path d="M0 0H5L2.5 3.0Z" fill="#777"/></svg>
<span class="t" style="left:926.08px;top:152.67px;font-size:11.5px;line-height:11.5px;color:#343434;transform:scaleX(1.0433);transform-origin:0 0;">Configuración</span>
<div class="a " style="left:1006px;top:78px;width:1px;height:84px;background:#d2d2d2;"></div>
<span class="t" style="left:306.50px;top:181.17px;font-size:11.5px;line-height:11.5px;color:#0a0a0a;transform:scaleX(0.9921);transform-origin:0 0;">Serie / Número:</span>
<div class="a " style="left:427px;top:176px;width:37px;height:20px;background:#fff;border:1px solid #d0d0d0;"></div>
<div class="a " style="left:447px;top:177px;width:16px;height:18px;background:#f0f0f0;"></div>
<span class="t" style="left:431.12px;top:181.17px;font-size:11.5px;line-height:11.5px;color:#0a0a0a;">1</span>
<svg class="a" style="left:452.5px;top:184.75px;" width="5" height="3.0" viewBox="0 0 5 3.0"><path d="M0 0H5L2.5 3.0Z" fill="#222"/></svg>
<div class="a " style="left:467px;top:176px;width:52px;height:18px;background:#fff;border:1px solid #d0d0d0;"></div>
<span class="t" style="left:510.12px;top:179.17px;font-size:11.5px;line-height:11.5px;color:#0a0a0a;">1</span>
<span class="t" style="left:541.16px;top:181.17px;font-size:11.5px;line-height:11.5px;color:#0a0a0a;transform:scaleX(0.9588);transform-origin:0 0;">Fecha:</span>
<div class="a " style="left:591px;top:176px;width:86px;height:18px;background:#fff;border:1px solid #d0d0d0;"></div>
<div class="a " style="left:658px;top:177px;width:18px;height:16px;background:#f0f0f0;"></div>
<span class="t" style="left:592.64px;top:179.17px;font-size:11.5px;line-height:11.5px;color:#0a0a0a;transform:scaleX(0.9692);transform-origin:0 0;">30/08/2023</span>
<svg class="a" style="left:665.0px;top:184.25px;" width="5" height="3.0" viewBox="0 0 5 3.0"><path d="M0 0H5L2.5 3.0Z" fill="#222"/></svg>
<div class="a " style="left:681px;top:176px;width:39px;height:18px;background:#fff;border:1px solid #d0d0d0;"></div>
<span class="t" style="left:683.18px;top:179.17px;font-size:11.5px;line-height:11.5px;color:#0a0a0a;transform:scaleX(0.9315);transform-origin:0 0;">15:59</span>
<span class="t" style="left:747.51px;top:181.17px;font-size:11.5px;line-height:11.5px;color:#0a0a0a;transform:scaleX(0.9825);transform-origin:0 0;">Su ref.:</span>
<div class="a " style="left:794px;top:176px;width:233px;height:18px;background:#fff;border:1px solid #d0d0d0;"></div>
<span class="t" style="left:1038.13px;top:181.17px;font-size:11.5px;line-height:11.5px;color:#0a0a0a;">Estado:</span>
<div class="a " style="left:1087px;top:176px;width:216px;height:20px;background:#fff;border:1px solid #d0d0d0;"></div>
<div class="a " style="left:1286px;top:177px;width:16px;height:18px;background:#f0f0f0;"></div>
<span class="t" style="left:1090.12px;top:181.17px;font-size:11.5px;line-height:11.5px;color:#0a0a0a;transform:scaleX(1.0099);transform-origin:0 0;">Pendiente</span>
<svg class="a" style="left:1291.5px;top:184.75px;" width="5" height="3.0" viewBox="0 0 5 3.0"><path d="M0 0H5L2.5 3.0Z" fill="#222"/></svg>
<div class="a " style="left:303px;top:197px;width:84px;height:23px;background:#f3f3f3;border:1px solid #9c9c9c;"></div>
<div class="a " style="left:370px;top:198px;width:1px;height:21px;background:#9c9c9c;"></div>
<span class="t" style="left:311.01px;top:203.67px;font-size:11.5px;line-height:11.5px;color:#0a0a0a;transform:scaleX(0.9867);transform-origin:0 0;">Cliente:</span>
<svg class="a" style="left:376.0px;top:207.25px;" width="5" height="3.0" viewBox="0 0 5 3.0"><path d="M0 0H5L2.5 3.0Z" fill="#222"/></svg>
<div class="a " style="left:427px;top:199px;width:60px;height:19px;background:#fff;border:1px solid #d0d0d0;"></div>
<span class="t" style="left:477.62px;top:202.17px;font-size:11.5px;line-height:11.5px;color:#0a0a0a;">1</span>
<span class="t" style="left:490.19px;top:202.17px;font-size:11.5px;line-height:11.5px;color:#0a0a0a;transform:scaleX(0.9216);transform-origin:0 0;">MARIA GERMAN TRIGO</span>
<div class="a " style="left:959px;top:199px;width:254px;height:10px;background:#fff;border:1px solid #d0d0d0;"></div>
<div class="a " style="left:1196px;top:200px;width:16px;height:9px;background:#f0f0f0;"></div>
<div class="a " style="left:1219px;top:198px;width:84px;height:10px;background:#f0f0f0;border:1px solid #b5b5b5;"></div>
<span class="t" style="left:307.00px;top:228.67px;font-size:11.5px;line-height:11.5px;color:#0a0a0a;transform:scaleX(0.9681);transform-origin:0 0;">Almacén:</span>
<div class="a " style="left:427px;top:224px;width:305px;height:20px;background:#fff;border:1px solid #d0d0d0;"></div>
<div class="a " style="left:715px;top:225px;width:16px;height:18px;background:#f0f0f0;"></div>
<span class="t" style="left:431.08px;top:228.67px;font-size:11.5px;line-height:11.5px;color:#0a0a0a;transform:scaleX(0.8387);transform-origin:0 0;">GENERAL</span>
<svg class="a" style="left:720.5px;top:232.75px;" width="5" height="3.0" viewBox="0 0 5 3.0"><path d="M0 0H5L2.5 3.0Z" fill="#222"/></svg>
<div class="a " style="left:305px;top:251px;width:1000px;height:214px;background:#fff;border:1px solid #5a5a5a;"></div>
<div class="a " style="left:306px;top:279px;width:998px;height:1px;background:#d2d2d2;"></div>
<div class="a " style="left:335px;top:252px;width:1px;height:27px;background:#d2d2d2;"></div>
<div class="a " style="left:445px;top:252px;width:1px;height:27px;background:#d2d2d2;"></div>
<span class="t" style="left:312.60px;top:259.40px;font-size:13px;line-height:13px;color:#0a0a0a;transform:scaleX(0.9041);transform-origin:0 0;">LIN</span>
<span class="t" style="left:340.00px;top:259.40px;font-size:13px;line-height:13px;color:#0a0a0a;transform:scaleX(0.8170);transform-origin:0 0;">ARTÍCULO</span>
<span class="t" style="left:449.17px;top:259.40px;font-size:13px;line-height:13px;color:#0a0a0a;transform:scaleX(0.8272);transform-origin:0 0;">DESCRIPCIÓN</span>
<span class="t" style="left:325.38px;top:288.65px;font-size:13px;line-height:13px;color:#0a0a0a;">1</span>
<span class="t" style="left:340.00px;top:288.65px;font-size:13px;line-height:13px;color:#0a0a0a;transform:scaleX(0.8731);transform-origin:0 0;">AMB001</span>
<span class="t" style="left:450.00px;top:288.65px;font-size:13px;line-height:13px;color:#0a0a0a;transform:scaleX(0.8576);transform-origin:0 0;">AMBIENTADOR ELÉCTRICO MANZANA</span>
<div class="a " style="left:306px;top:309px;width:998px;height:28px;background:#dfdfdf;"></div>
<span class="t" style="left:325.38px;top:317.40px;font-size:13px;line-height:13px;color:#0a0a0a;">2</span>
<span class="t" style="left:339.19px;top:317.40px;font-size:13px;line-height:13px;color:#0a0a0a;transform:scaleX(0.8144);transform-origin:0 0;">DIE001</span>
<span class="t" style="left:449.46px;top:317.40px;font-size:13px;line-height:13px;color:#0a0a0a;transform:scaleX(0.8700);transform-origin:0 0;">COMPLEMENTO ALIMENTICIO OMEGA-3</span>
<div class="a " style="left:336px;top:346px;width:379px;height:32px;background:#fff;border:1px solid #5a5a5a;"></div>
<svg class="a" style="left:345px;top:353px;" width="17" height="18" viewBox="0 0 17 18"><path d="M1.5 1.5H8.5L12.5 5.5V16.5H1.5Z" fill="#fff" stroke="#222" stroke-width="1"/><path d="M8.5 1.5V5.5H12.5" fill="none" stroke="#222" stroke-width="1"/><rect x="7" y="9" width="9" height="8" fill="#fff"/><path d="M11.5 9.5V16.5M8 13H15" stroke="#1e9e3e" stroke-width="1.2"/></svg>
<svg class="a" style="left:366px;top:353px;" width="18" height="18" viewBox="0 0 18 18"><path d="M4.5 1.5H11.5L15.5 5.5V16.5H4.5Z" fill="#fff" stroke="#222" stroke-width="1"/><path d="M11.5 1.5V5.5H15.5" fill="none" stroke="#222" stroke-width="1"/><rect x="5.5" y="7.5" width="11" height="4" fill="#fff" stroke="#1a78c8" stroke-width="1.1"/><path d="M2.5 3V15M0.5 5L2.5 2.5L4.5 5M0.5 13L2.5 15.5L4.5 13" fill="none" stroke="#1e9e3e" stroke-width="1.1"/></svg>
<svg class="a" style="left:389px;top:353px;" width="18" height="18" viewBox="0 0 18 18"><path d="M6.5 1.5H12.5L16.5 5.5V13.5H6.5Z" fill="#fff" stroke="#222" stroke-width="1"/><path d="M12.5 1.5V5.5H16.5" fill="none" stroke="#222" stroke-width="1"/><path d="M1.5 5.5H7.5L11.5 9.5V17.5H1.5Z" fill="#fff" stroke="#222" stroke-width="1"/><path d="M7.5 5.5V9.5H11.5" fill="none" stroke="#222" stroke-width="1"/></svg>
<svg class="a" style="left:413px;top:353px;" width="18" height="18" viewBox="0 0 18 18"><path d="M1.5 1.5H8.5L12.5 5.5V16.5H1.5Z" fill="#fff" stroke="#222" stroke-width="1"/><path d="M8.5 1.5V5.5H12.5" fill="none" stroke="#222" stroke-width="1"/><path d="M8 14.8L8.8 12.2L14.6 6.2L16.2 7.8L10.4 13.8Z" fill="#9ecbee" stroke="#1a78c8" stroke-width="0.9"/></svg>
<svg class="a" style="left:437px;top:355px;" width="14" height="14" viewBox="0 0 14 14"><path d="M1.2 1.2L12.8 12.8M12.8 1.2L1.2 12.8" stroke="#e8332f" stroke-width="2.1"/></svg>
<div class="a " style="left:459px;top:352px;width:1px;height:23px;background:#8c8c8c;"></div>
<svg class="a" style="left:465px;top:353px;" width="17" height="18" viewBox="0 0 17 18"><rect x="4.5" y="1.5" width="11" height="12" fill="#e4e4e4" stroke="#bbb"/><rect x="1.5" y="4.5" width="11" height="12" fill="#e4e4e4" stroke="#aaa"/><path d="M3.5 8.5H10.5M3.5 10.5H10.5M3.5 12.5H10.5M3.5 14.5H10.5" stroke="#bbb" stroke-width="1"/></svg>
<svg class="a" style="left:487px;top:354px;" width="18" height="16" viewBox="0 0 18 16"><rect x="0.5" y="1.5" width="16" height="13" fill="#e4e4e4" stroke="#aaa"/><path d="M1 12L6 7.5L9.5 10.5L12 8.5L16 12" fill="none" stroke="#aaa"/><circle cx="12.5" cy="4.8" r="1.4" fill="#aaa"/></svg>
<div class="a " style="left:511px;top:352px;width:1px;height:23px;background:#8c8c8c;"></div>
<svg class="a" style="left:516px;top:353px;" width="18" height="18" viewBox="0 0 18 18"><rect x="0.5" y="4.5" width="11" height="11" fill="#b5b5b5"/><path d="M0.5 8.5H11.5M0.5 12.5H11.5M4.5 4.5V15.5M8.5 4.5V15.5" stroke="#999" stroke-width="1"/><rect x="11.5" y="0.5" width="5" height="16" fill="#c8c8c8" stroke="#aaa"/><path d="M13 3.5H15M13 6.5H15M13 9.5H15M13 12.5H15" stroke="#8a8a8a" stroke-width="1"/></svg>
<div class="a " style="left:540px;top:352px;width:1px;height:23px;background:#8c8c8c;"></div>
<div class="a " style="left:544px;top:351px;width:166px;height:24px;background:#fff;border:1px solid #d0d0d0;border-bottom-color:#9a9a9a;border-radius:2px;"></div>
<span class="t" style="left:546.08px;top:357.17px;font-size:11.5px;line-height:11.5px;color:#8a8a8a;transform:scaleX(1.0558);transform-origin:0 0;">Buscar código en documento</span>
<div class="a " style="left:394px;top:495px;width:925px;height:1px;background:#e2e2e2;"></div>
<div class="a " style="left:393px;top:477px;width:126px;height:19px;background:#f5f5f5;border:1px solid #e2e2e2;"></div>
<div class="a " style="left:297px;top:475px;width:97px;height:22px;background:#fafafa;border:1px solid #efefef;border-bottom:none;border-left:none;"></div>
<span class="t" style="left:300.64px;top:480.17px;font-size:11.5px;line-height:11.5px;color:#111;transform:scaleX(0.9838);transform-origin:0 0;">Detalles de línea</span>
<span class="t" style="left:397.75px;top:481.17px;font-size:11.5px;line-height:11.5px;color:#111;transform:scaleX(1.0142);transform-origin:0 0;">Totales del documento</span>
<div class="a " style="left:304px;top:500px;width:325px;height:17px;background:#eeeeee;"></div>
<span class="t" style="left:307.50px;top:503.67px;font-size:11.5px;line-height:11.5px;color:#505050;transform:scaleX(1.0064);transform-origin:0 0;">Otros datos</span>
<span class="t" style="left:303.10px;top:529.92px;font-size:11.5px;line-height:11.5px;color:#9a9a9a;transform:scaleX(1.0337);transform-origin:0 0;"><u>B</u>ultos:</span>
<div class="a " style="left:388px;top:524px;width:69px;height:19px;background:#efefef;border:1px solid #cfcfcf;"></div>
<span class="t" style="left:433.00px;top:528.17px;font-size:11.5px;line-height:11.5px;color:#7d7d7d;">0,00</span>
<span class="t" style="left:470.96px;top:529.92px;font-size:11.5px;line-height:11.5px;color:#9a9a9a;transform:scaleX(1.0413);transform-origin:0 0;">IVA incluido:</span>
<div class="a " style="left:560px;top:524px;width:69px;height:21px;background:#efefef;border:1px solid #c4c4c4;"></div>
<div class="a " style="left:563px;top:527px;width:46px;height:15px;background:#fff;"></div>
<span class="t" style="left:563.08px;top:530.17px;font-size:11.5px;line-height:11.5px;color:#333;transform:scaleX(1.0467);transform-origin:0 0;">No</span>
<svg class="a" style="left:617.5px;top:533.25px;" width="5" height="3.0" viewBox="0 0 5 3.0"><path d="M0 0H5L2.5 3.0Z" fill="#9a9a9a"/></svg>
<span class="t" style="left:303.52px;top:552.17px;font-size:11.5px;line-height:11.5px;color:#9a9a9a;transform:scaleX(0.9594);transform-origin:0 0;">Comisión (%)</span>
<svg class="a" style="left:379.5px;top:557.25px;" width="5" height="3.0" viewBox="0 0 5 3.0"><path d="M0 0H5L2.5 3.0Z" fill="#9a9a9a"/></svg>
<div class="a " style="left:375px;top:566px;width:14px;height:1px;background:#9a9a9a;"></div>
<div class="a " style="left:392px;top:548px;width:65px;height:19px;background:#efefef;border:1px solid #cfcfcf;"></div>
<span class="t" style="left:426.62px;top:551.67px;font-size:11.5px;line-height:11.5px;color:#7d7d7d;">0,000</span>
<span class="t" style="left:471.50px;top:552.17px;font-size:11.5px;line-height:11.5px;color:#9a9a9a;transform:scaleX(1.0079);transform-origin:0 0;">Costo:</span>
<div class="a " style="left:560px;top:548px;width:69px;height:19px;background:#efefef;border:1px solid #cfcfcf;"></div>
<span class="t" style="left:605.00px;top:551.67px;font-size:11.5px;line-height:11.5px;color:#7d7d7d;">6,30</span>
<div class="a " style="left:304px;top:575px;width:162px;height:17px;background:#eeeeee;"></div>
<span class="t" style="left:307.12px;top:578.67px;font-size:11.5px;line-height:11.5px;color:#505050;transform:scaleX(1.0102);transform-origin:0 0;">Formato de impresión</span>
<div class="a " style="left:472px;top:575px;width:158px;height:17px;background:#eeeeee;"></div>
<span class="t" style="left:475.50px;top:578.67px;font-size:11.5px;line-height:11.5px;color:#505050;">Acumular sumatorio</span>
<div class="a " style="left:304px;top:600px;width:13px;height:13px;background:#f6f6f6;border:1px solid #bdbdbd;border-radius:3px;"></div>
<span class="t" style="left:319.62px;top:601.67px;font-size:11.5px;line-height:11.5px;color:#777;">N</span>
<div class="a " style="left:356px;top:600px;width:13px;height:13px;background:#f6f6f6;border:1px solid #bdbdbd;border-radius:3px;"></div>
<span class="t" style="left:372.00px;top:601.67px;font-size:11.5px;line-height:11.5px;color:#777;">C</span>
<div class="a " style="left:408px;top:600px;width:13px;height:13px;background:#f6f6f6;border:1px solid #bdbdbd;border-radius:3px;"></div>
<span class="t" style="left:424.00px;top:601.67px;font-size:11.5px;line-height:11.5px;color:#777;">S</span>
<div class="a " style="left:472px;top:596px;width:157px;height:21px;background:#efefef;border:1px solid #cfcfcf;"></div>
<div class="a " style="left:612px;top:596px;width:17px;height:21px;background:#f4f4f4;border:1px solid #a5a5a5;"></div>
<svg class="a" style="left:618.0px;top:605.25px;" width="5" height="3.0" viewBox="0 0 5 3.0"><path d="M0 0H5L2.5 3.0Z" fill="#9a9a9a"/></svg>
<div class="a " style="left:640px;top:500px;width:120px;height:17px;background:#eeeeee;"></div>
<span class="t" style="left:642.62px;top:504.17px;font-size:11.5px;line-height:11.5px;color:#505050;">Números de serie / lotes</span>
<div class="a " style="left:640px;top:524px;width:120px;height:113px;background:#fff;border:1px solid #4a4a4a;"></div>
<span class="t" style="left:644.86px;top:533.90px;font-size:13px;line-height:13px;color:#000;font-weight:bold;transform:scaleX(0.8489);transform-origin:0 0;">Nº DE SERIE / LOTE</span>
<div class="a " style="left:641px;top:557px;width:118px;height:31px;background:#dfdfdf;border-top:1px dotted #000;border-bottom:1px dotted #000;"></div>
<span class="t" style="left:644.63px;top:567.32px;font-size:12.5px;line-height:12.5px;color:#111;transform:scaleX(0.8720);transform-origin:0 0;">L363</span>
<div class="a " style="left:640px;top:640px;width:75px;height:21px;background:#f6f6f6;border:1px solid #adadad;"></div>
<span class="t" style="left:659.62px;top:647.17px;font-size:11.5px;line-height:11.5px;color:#555;">Nuevo</span>
<div class="a " style="left:732px;top:640px;width:30px;height:21px;background:#f6f6f6;border:1px solid #adadad;"></div>
<div class="a " style="left:297px;top:672px;width:1022px;height:76px;background:#f0f0f0;"></div>
<div class="a " style="left:297px;top:669px;width:1022px;height:3px;background:#f8f8f8;"></div>
<span class="t" style="left:308.10px;top:678.67px;font-size:11.5px;line-height:11.5px;color:#7a7a7a;transform:scaleX(1.0300);transform-origin:0 0;">Unidades:</span>
<span class="t" style="left:433.50px;top:678.67px;font-size:11.5px;line-height:11.5px;color:#111;">3,00</span>
<span class="t" style="left:460.08px;top:678.67px;font-size:11.5px;line-height:11.5px;color:#7a7a7a;transform:scaleX(1.0537);transform-origin:0 0;">Neto:</span>
<span class="t" style="left:542.65px;top:678.67px;font-size:11.5px;line-height:11.5px;color:#111;transform:scaleX(0.9422);transform-origin:0 0;">30,04</span>
<span class="t" style="left:309.00px;top:694.92px;font-size:11.5px;line-height:11.5px;color:#7a7a7a;transform:scaleX(1.0152);transform-origin:0 0;">Art. diferentes:</span>
<span class="t" style="left:449.62px;top:694.92px;font-size:11.5px;line-height:11.5px;color:#111;">2</span>
<span class="t" style="left:460.74px;top:694.92px;font-size:11.5px;line-height:11.5px;color:#7a7a7a;transform:scaleX(1.0286);transform-origin:0 0;">Total:</span>
<span class="t" style="left:542.65px;top:694.92px;font-size:11.5px;line-height:11.5px;color:#111;transform:scaleX(0.9464);transform-origin:0 0;">36,35</span>
<span class="t" style="left:304.68px;top:731.67px;font-size:11.5px;line-height:11.5px;color:#333;transform:scaleX(0.9415);transform-origin:0 0;">MARIA GERMAN</span>
<span class="t" style="left:673.68px;top:731.67px;font-size:11.5px;line-height:11.5px;color:#333;transform:scaleX(0.9344);transform-origin:0 0;">MARIA.GERMAN@GAMIL.COM</span>
<span class="t" style="left:1030.34px;top:731.67px;font-size:11.5px;line-height:11.5px;color:#333;transform:scaleX(0.8812);transform-origin:0 0;">[SUPERVISOR]</span>
<span class="t" style="left:1168.34px;top:731.67px;font-size:11.5px;line-height:11.5px;color:#333;transform:scaleX(0.8812);transform-origin:0 0;">[SUPERVISOR]</span>
<div class="a " style="left:751px;top:204px;width:600px;height:520px;background:#fff;border:1px solid #747474;"></div>
<span class="t" style="left:982.63px;top:214.04px;font-size:12px;line-height:12px;color:#222;">Firmar documento</span>
<svg class="a" style="left:1329px;top:210px;" width="12" height="12" viewBox="0 0 12 12"><path d="M1.5 1.5L10.5 10.5M10.5 1.5L1.5 10.5" stroke="#333" stroke-width="2"/></svg>
<span class="t" style="left:775.51px;top:251.67px;font-size:11.5px;line-height:11.5px;color:#0a0a0a;transform:scaleX(0.9858);transform-origin:0 0;">Serie / Número:</span>
<div class="a " style="left:896px;top:246px;width:28px;height:19px;background:#fff;border:1px solid #d0d0d0;"></div>
<span class="t" style="left:906.62px;top:249.92px;font-size:11.5px;line-height:11.5px;color:#0a0a0a;">1</span>
<div class="a " style="left:928px;top:246px;width:56px;height:19px;background:#fff;border:1px solid #d0d0d0;"></div>
<span class="t" style="left:975.12px;top:249.92px;font-size:11.5px;line-height:11.5px;color:#0a0a0a;">1</span>
<span class="t" style="left:1010.16px;top:251.67px;font-size:11.5px;line-height:11.5px;color:#0a0a0a;transform:scaleX(0.9588);transform-origin:0 0;">Fecha:</span>
<div class="a " style="left:1096px;top:246px;width:70px;height:19px;background:#f0f0f0;border:1px solid #c8c8c8;"></div>
<span class="t" style="left:1097.64px;top:249.92px;font-size:11.5px;line-height:11.5px;color:#8a8a8a;transform:scaleX(0.9692);transform-origin:0 0;">30/08/2023</span>
<div class="a " style="left:1170px;top:246px;width:39px;height:19px;background:#f0f0f0;border:1px solid #c8c8c8;"></div>
<span class="t" style="left:1175.17px;top:249.92px;font-size:11.5px;line-height:11.5px;color:#0a0a0a;transform:scaleX(0.9498);transform-origin:0 0;">15:59</span>
<span class="t" style="left:775.49px;top:275.17px;font-size:11.5px;line-height:11.5px;color:#0a0a0a;transform:scaleX(1.0133);transform-origin:0 0;">Cliente:</span>
<div class="a " style="left:896px;top:270px;width:52px;height:19px;background:#fff;border:1px solid #d0d0d0;"></div>
<span class="t" style="left:939.12px;top:273.67px;font-size:11.5px;line-height:11.5px;color:#0a0a0a;">1</span>
<span class="t" style="left:951.69px;top:273.67px;font-size:11.5px;line-height:11.5px;color:#0a0a0a;transform:scaleX(0.9216);transform-origin:0 0;">MARIA GERMAN TRIGO</span>
<span class="t" style="left:775.75px;top:301.78px;font-size:15.5px;line-height:15.5px;color:#0a0a0a;transform:scaleX(1.0141);transform-origin:0 0;">Total:</span>
<div class="a " style="left:896px;top:294px;width:88px;height:28px;background:#fff;border:1px solid #d0d0d0;"></div>
<span class="t" style="left:942.49px;top:300.28px;font-size:15.5px;line-height:15.5px;color:#0a0a0a;transform:scaleX(1.0233);transform-origin:0 0;">36,35</span>
<span class="t" style="left:1007.27px;top:301.78px;font-size:15.5px;line-height:15.5px;color:#0a0a0a;transform:scaleX(0.9843);transform-origin:0 0;">Pendiente:</span>
<div class="a " style="left:1096px;top:294px;width:88px;height:28px;background:#fff;border:1px solid #d0d0d0;"></div>
<span class="t" style="left:1143.00px;top:300.28px;font-size:15.5px;line-height:15.5px;color:#0a0a0a;transform:scaleX(1.0100);transform-origin:0 0;">36,35</span>
<span class="t" style="left:775.11px;top:333.67px;font-size:11.5px;line-height:11.5px;color:#0a0a0a;transform:scaleX(1.0194);transform-origin:0 0;">Firma del documento:</span>
<div class="w" style="left:776px;top:350px;width:562px;height:324px;background:#fff;border:1px solid #555;"><span style="position:absolute;left:136.8px;top:199.9px;font-size:65px;line-height:65px;color:#d0d0d0;white-space:pre;transform-origin:0 55.0px;transform:rotate(-30deg);">Firmar aquí.</span></div>
<div class="a " style="left:752px;top:685px;width:598px;height:38px;background:#f4f4f4;"></div>
<div class="a " style="left:764px;top:693px;width:75px;height:23px;background:#f6f6f6;border:1px solid #9d9d9d;"></div>
<span class="t" style="left:776.66px;top:699.67px;font-size:11.5px;line-height:11.5px;color:#444;transform:scaleX(0.9575);transform-origin:0 0;">Deshacer</span>
<div class="a " style="left:856px;top:693px;width:75px;height:23px;background:#f6f6f6;border:1px solid #9d9d9d;"></div>
<span class="t" style="left:873.64px;top:699.67px;font-size:11.5px;line-height:11.5px;color:#444;transform:scaleX(0.9850);transform-origin:0 0;">Limpiar</span>
<div class="a " style="left:1172px;top:693px;width:75px;height:23px;background:#f6f6f6;border:2px solid #8e8e8e;"></div>
<span class="t" style="left:1189.00px;top:699.67px;font-size:11.5px;line-height:11.5px;color:#000;transform:scaleX(0.9873);transform-origin:0 0;">Aceptar</span>
<div class="a " style="left:1264px;top:693px;width:75px;height:23px;background:#f6f6f6;border:1px solid #9d9d9d;"></div>
<span class="t" style="left:1279.52px;top:699.67px;font-size:11.5px;line-height:11.5px;color:#000;transform:scaleX(0.9560);transform-origin:0 0;">Cancelar</span>
</body></html>
